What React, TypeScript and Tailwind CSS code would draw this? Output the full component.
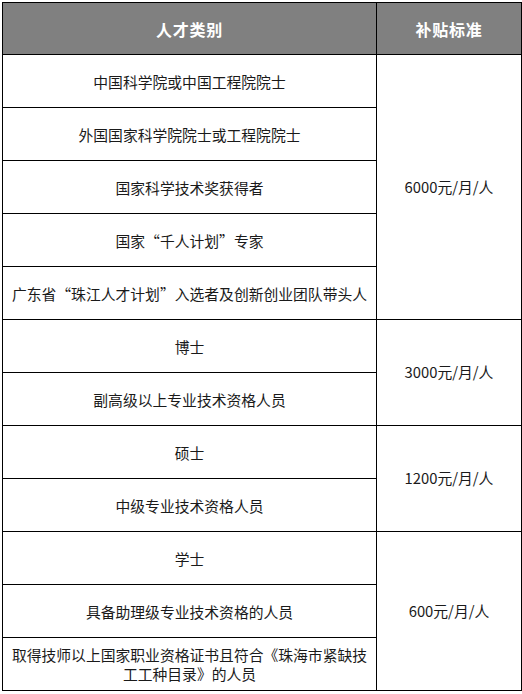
import React from 'react';

type Group = {
    amount: string;
    items: React.ReactNode[];
};

const GROUPS: Group[] = [
    {
        amount: '6000元/月/人',
        items: [
            '中国科学院或中国工程院院士',
            '外国国家科学院院士或工程院院士',
            '国家科学技术奖获得者',
            '国家“千人计划”专家',
            '广东省“珠江人才计划”入选者及创新创业团队带头人',
        ],
    },
    {
        amount: '3000元/月/人',
        items: ['博士', '副高级以上专业技术资格人员'],
    },
    {
        amount: '1200元/月/人',
        items: ['硕士', '中级专业技术资格人员'],
    },
    {
        amount: '600元/月/人',
        items: [
            '学士',
            '具备助理级专业技术资格的人员',
            <>
                <span className="block">取得技师以上国家职业资格证书且符合《珠海市紧缺技</span>
                <span className="block">工工种目录》的人员</span>
            </>,
        ],
    },
];

const font = { fontFamily: '"Noto Sans CJK SC", "Noto Sans", sans-serif' };

export default function App() {
    return (
        <div className="w-[522px] h-[694px] bg-white pt-[2px] pl-[2px]" style={font}>
            <table className="w-[519px] border-collapse table-fixed text-[#1a1a1a]">
                <colgroup>
                    <col className="w-[374px]" />
                    <col className="w-[145px]" />
                </colgroup>
                <thead>
                    <tr className="h-[52px] bg-[#808080] text-white">
                        <th className="border border-black text-[16px] font-bold tracking-[0.8px]">人才类别</th>
                        <th className="border border-black text-[16px] font-bold tracking-[0.8px]">补贴标准</th>
                    </tr>
                </thead>
                <tbody>
                    {GROUPS.map((group, g) =>
                        group.items.map((item, i) => (
                            <tr key={`${g}-${i}`} className="h-[53px]">
                                <td className="border border-black px-0 text-center text-[14.8px] leading-[19px] whitespace-nowrap">
                                    {item}
                                </td>
                                {i === 0 && (
                                    <td
                                        rowSpan={group.items.length}
                                        className="border border-black text-center text-[14.8px]"
                                    >
                                        {group.amount}
                                    </td>
                                )}
                            </tr>
                        ))
                    )}
                </tbody>
            </table>
        </div>
    );
}
